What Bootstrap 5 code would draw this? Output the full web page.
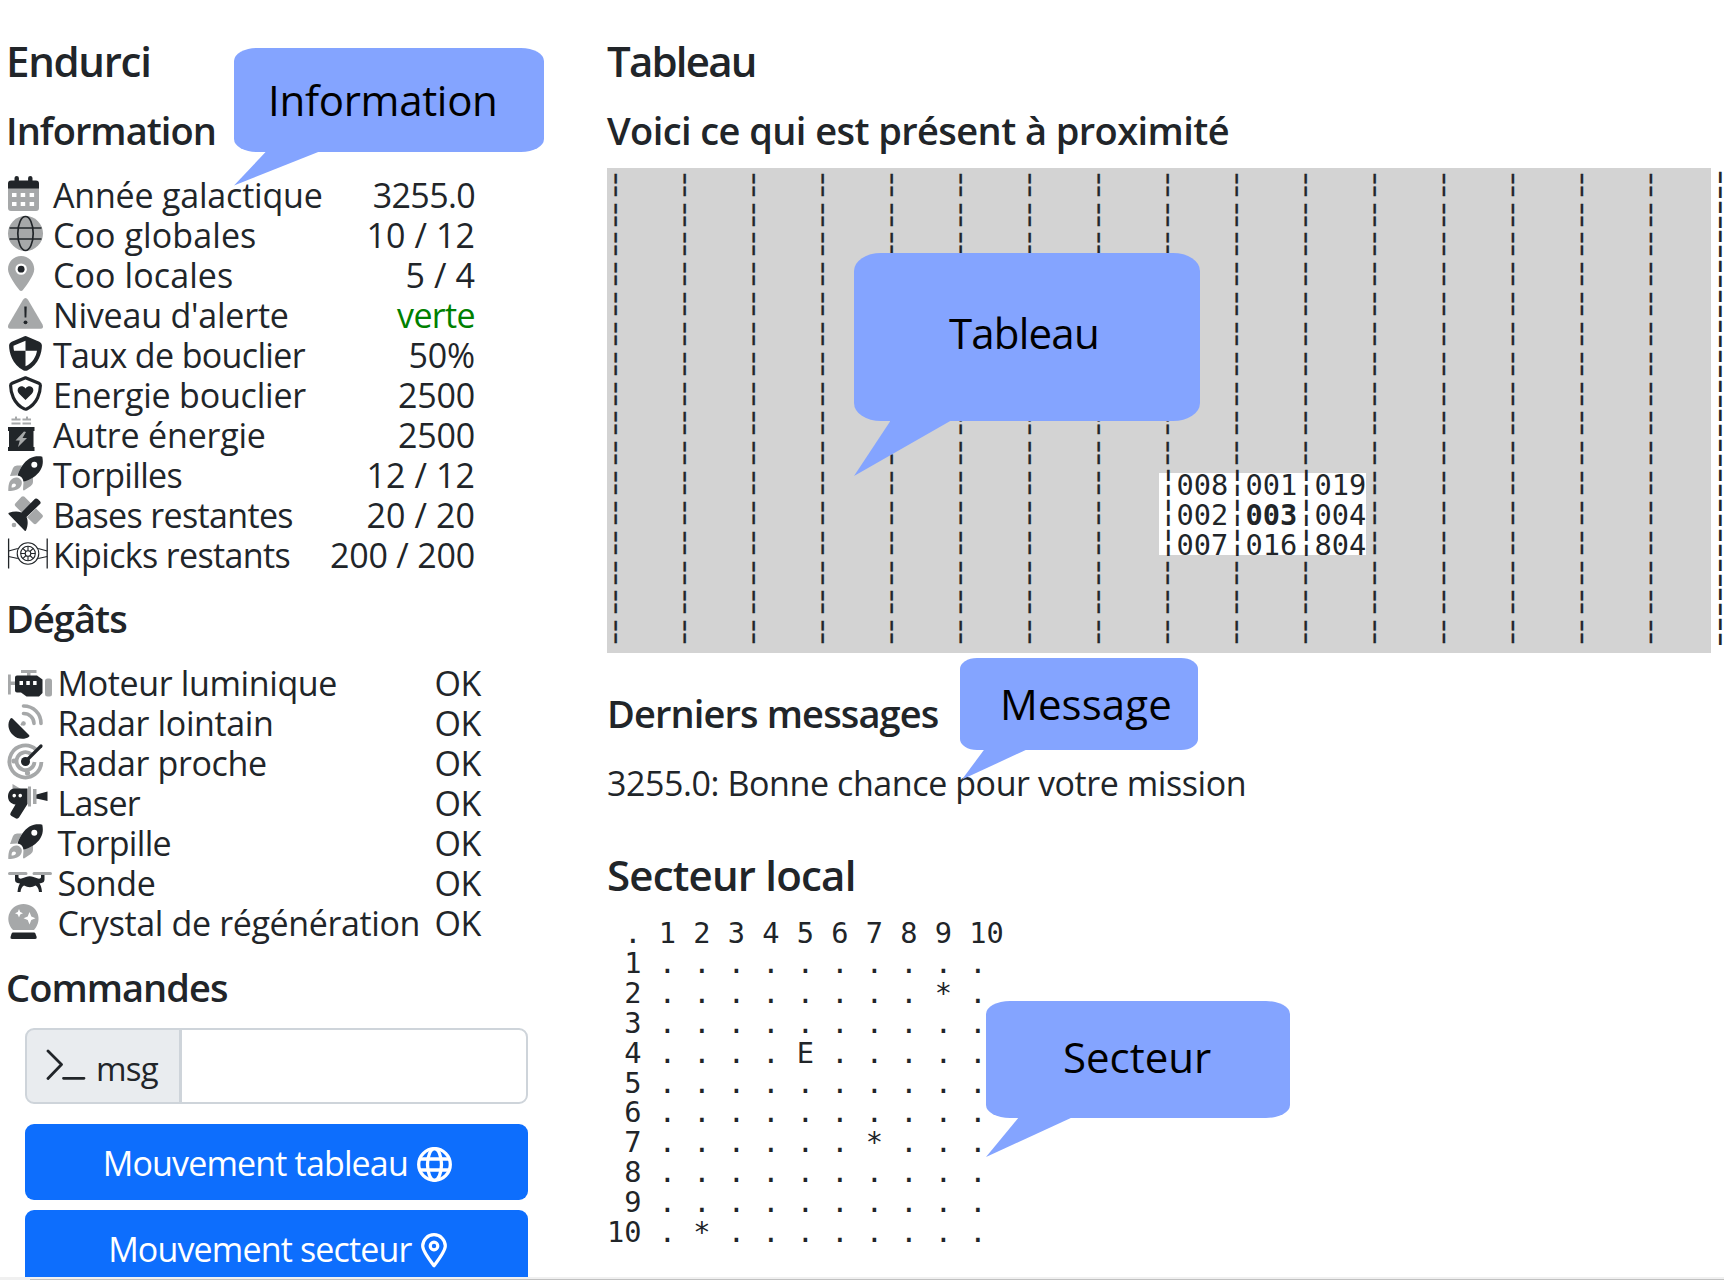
<!DOCTYPE html>
<html lang="fr">
<head>
<meta charset="utf-8">
<meta name="viewport" content="width=device-width, initial-scale=1">
<title>Endurci</title>
<link rel="stylesheet" href="https://cdn.jsdelivr.net/npm/bootstrap@5.3.0/dist/css/bootstrap.min.css">
<style>
  body { font-family: "Open Sans", sans-serif; font-size: 34px; line-height: 40.1px; color: #212529; overflow: hidden; height: 1280px; position: relative; }
  .game { height: 1277px; overflow: hidden; }
  .side { width: 607px; padding: 34.5px 0 0 7px; flex: none; }
  .main { width: 1117px; padding-top: 34.5px; flex: none; }
  h2, h3 { font-weight: 600; margin: 0; white-space: nowrap; }
  h2 { font-size: 42px; line-height: 52px; letter-spacing: -.8px; }
  h3 { font-size: 38px; line-height: 46px; letter-spacing: -.95px; margin-top: 20.8px; }
  .side h2, .side h3 { margin-left: -1px; }
  .ship { letter-spacing: -1.3px; }
  .board-title { letter-spacing: -1.8px; }
  .nearby { letter-spacing: -.58px; }
  .damage-title { margin-top: 19.5px; }
  .news-title { margin-top: 37.3px; letter-spacing: -.87px; }
  .sector-title { margin-top: 45px; }
  .info { width: 468px; margin-top: 21.3px; }
  .damage { width: 474px; margin-top: 21.5px; }
  .stat { height: 40.1px; white-space: nowrap; letter-spacing: -.2px; }
  .damage .stat { letter-spacing: -.37px; }
  .stat .snug { letter-spacing: -.65px; }
  .stat .roomy { letter-spacing: .1px; }
  .pic { width: 46px; height: 40.1px; flex: none; }
  .damage .pic { width: 50.5px; }
  .pic svg { display: block; width: 35px; height: 35px; margin: 1px 0 0 1px; overflow: visible; fill: #212529; }
  .soft { fill: #a6a8a9; }
  .green { color: green; }
  .cmds { width: 502.7px; margin: 18.2px 0 0 18px; }
  .cmds .input-group { height: 76px; margin-bottom: 20px; }
  .cmds .input-group-text { width: 155.5px; font-size: 33px; border: 2px solid #ced4da; background: #e9ecef; border-radius: 9px 0 0 9px; padding: 5px 0 0 19px; letter-spacing: -.8px; color: #212529; }
  .cmds .input-group-text svg { width: 40px; height: 31px; margin: -9px 10px 0 0; }
  .cmds .form-control { border: 2px solid #ced4da; border-radius: 0 9px 9px 0; }
  .cmds .btn { height: 76px; margin-bottom: 10px; font-size: 34px; line-height: 40px; border: 0; border-radius: 9px; letter-spacing: -.85px; padding: 1px 0 0 2px; --bs-btn-bg: #0d6efd; }
  .cmds .btn svg { margin-left: 9px; margin-top: -4px; }
  .cells { font-family: "DejaVu Sans Mono", monospace; font-size: 28.67px; line-height: 29.85px; white-space: pre; }
  .board { width: 1104px; height: 485px; margin-top: 14.7px; padding-top: 3.7px; background: #d3d3d3; }
  .line { height: 29.85px; display: flex; }
  .line span { display: inline-block; flex: none; height: 29.85px; }
  .bar { width: 17.26px; text-align: center; font-size: 25.5px; line-height: 22.5px; -webkit-text-stroke: .3px #212529; }
  .room { width: 51.78px; line-height: 31.5px; }
  .bar.tall { font-size: 30px; -webkit-text-stroke-width: .1px; }
  .seen { background: #fff; }
  .seen.first { background: linear-gradient(#d3d3d3 2.6px, #fff 2.6px); }
  .seen.last { background: linear-gradient(#fff 25.2px, #d3d3d3 25.2px); }
  .news { margin: 27.2px 0 0; letter-spacing: -.42px; }
  .sector { margin: 18.8px 0 0; overflow: visible; color: #212529; }
  .hbar { height: 3px; background: #f0f0f0; }
  .hbar div { height: 1px; margin-left: 30px; background: #c1c1c1; position: relative; top: 2px; }
  .bubble { position: absolute; background: #84a4ff; border-radius: 23px / 13px; color: #000; font-size: 42px; line-height: 56px; white-space: nowrap; }
  .bubble::after { content: ""; position: absolute; left: 0; top: 100%; background: #84a4ff; margin-top: -1px; }
  .b-info { left: 234px; top: 48px; width: 310px; height: 103.5px; padding: 24px 0 0 34px; letter-spacing: -.3px; }
  .b-info::after { width: 88px; height: 35px; clip-path: polygon(33px 0, 88px 0, 0 100%); }
  .b-board { left: 854px; top: 253px; width: 346px; height: 168px; border-radius: 27px / 18px; padding: 52px 0 0 95px; letter-spacing: -.8px; }
  .b-board::after { width: 98px; height: 56px; clip-path: polygon(37px 0, 98px 0, 0 100%); }
  .b-msg { left: 960px; top: 658px; width: 238px; height: 91.5px; border-radius: 17px / 11px; padding: 18px 0 0 40px; letter-spacing: .1px; }
  .b-msg::after { width: 69px; height: 31px; clip-path: polygon(25px 0, 69px 0, 2px 100%); }
  .b-sector { left: 986px; top: 1001px; width: 304px; height: 117px; border-radius: 24px / 13px; padding: 28px 0 0 77px; }
  .b-sector::after { width: 87px; height: 40px; clip-path: polygon(33px 0, 87px 0, 0 100%); }
</style>
<script src="https://cdn.jsdelivr.net/npm/bootstrap@5.3.0/dist/js/bootstrap.bundle.min.js"></script>
</head>
<body>
<svg class="d-none">
  <symbol id="rocket" viewBox="0 0 35 35">
    <path class="soft" d="M2 20 5 12q1-2.500 4-2.500H14L9 19.500zM15.500 26 25 20.500V26q0 2.500-2.200 4L16 34.500q-1 0-1-1z"/>
    <path class="soft" fill-rule="evenodd" d="M2.500 24.500C5 21.500 9 20.500 12 23s2 6.500-.5 9C9 34.500 3 35 .3 35 .3 32 .4 27 2.500 24.500zm2 3.500c-.8.800-1 2.500-.9 3.500 1 .1 2.800-.1 3.600-.9.900-.9 1-2 .2-2.700s-2-.7-2.900.100z"/>
    <path fill-rule="evenodd" d="M34.300.7C31 0 26 0 21.500 2.500 16 6 12 12 9.500 19.500q3 .5 4.200 2 1.300 1.500 1.800 4.200C22 24 29 20 32.500 14 35.500 9 35 4 34.300.7zM26.300 5.800a3 3 0 1 1 0 6 3 3 0 0 1 0-6z"/>
  </symbol>
</svg>

<div class="game d-flex">
  <div class="side">
    <h2 class="ship">Endurci</h2>
    <h3>Information</h3>
    <div class="info">
      <div class="stat d-flex"><span class="pic"><svg viewBox="0 0 35 35"><path class="soft" fill-rule="evenodd" d="M0 12H31V32q0 3-3 3H3q-3 0-3-3zM4 17v4h4.500v-4zm8.700 0v4h4.500v-4zm8.900 0v4h4.500v-4zM4 26v4h4.500v-4zm8.700 0v4h4.500v-4zm8.900 0v4h4.500v-4z"/><path d="M0 12.500V7.500q0-3 3-3H6.500V2q0-2 2.200-2t2.200 2v2.500h9.200V2q0-2 2.200-2t2.200 2v2.500H28q3 0 3 3v5z"/></svg></span><span>Année galactique</span><span class="ms-auto snug">3255.0</span></div>
      <div class="stat d-flex"><span class="pic"><svg viewBox="0 0 35 35"><circle class="soft" cx="17.500" cy="17.500" r="17.500"/><g fill="none" stroke="#212529" stroke-width="1.700"><ellipse cx="17.500" cy="17.500" rx="7.700" ry="17"/><path d="M1.500 12H33.500M1.500 23H33.500"/></g></svg></span><span class="roomy">Coo globales</span><span class="ms-auto roomy">10 / 12</span></div>
      <div class="stat d-flex"><span class="pic"><svg viewBox="0 0 512 512"><path class="soft" fill-rule="evenodd" d="M384 192c0 87.400-117 243-168.300 307.200-12.300 15.300-35.100 15.300-47.400 0C117 435 0 279.400 0 192 0 86 86 0 192 0s192 86 192 192zM192 108a84 84 0 1 0 0 168 84 84 0 0 0 0-168z"/><circle cx="192" cy="192" r="50"/></svg></span><span class="roomy">Coo locales</span><span class="ms-auto roomy">5 / 4</span></div>
      <div class="stat d-flex"><span class="pic"><svg viewBox="0 0 35 35"><path class="soft" d="M15 3.800q2.500-3.500 5 0L34.500 28.500q1.800 4-2 4.300H2.500q-3.800-.3-2-4.300z"/><path d="M16.300 10.500h2.400l-.3 11h-1.800z"/><circle cx="17.500" cy="26.300" r="1.900"/></svg></span><span>Niveau d'alerte</span><span class="ms-auto green snug">verte</span></div>
      <div class="stat d-flex"><span class="pic"><svg viewBox="0 0 512 512"><path fill-rule="evenodd" d="M269.400 2.900a32 32 0 0 0-26.800 0L54.300 82.800c-22 9.300-38.400 31-38.300 57.200.5 99.200 41.300 280.700 213.600 363.200 16.700 8 36.100 8 52.800 0C454.700 420.700 495.500 239.200 496 140c.1-26.200-16.300-47.900-38.300-57.200zM256 70V214H88C82 190 80 165 80 141zm0 144H424C410 300 362 390 256 444z"/></svg></span><span class="snug">Taux de bouclier</span><span class="ms-auto">50%</span></div>
      <div class="stat d-flex"><span class="pic"><svg viewBox="0 0 512 512"><path fill="none" stroke="#212529" stroke-width="46" stroke-linejoin="round" d="M256 25 60 107c-14 6-22 18-22 33 1 95 40 265 201 342 11 5 23 5 34 0 161-77 200-247 201-342 0-15-8-27-22-33z"/><path d="M256 352 163 260c-30-31-28-72-3-94 27-23 64-17 87 7l9 9 9-9c23-24 60-30 87-7 25 22 27 63-3 94z"/></svg></span><span>Energie bouclier</span><span class="ms-auto">2500</span></div>
      <div class="stat d-flex"><span class="pic"><svg viewBox="0 0 35 35"><path class="soft" d="M3.500 2.500H7V1q1-1.500 2 0v1.500h3.500v2h-9zM14.500 2.500H18V1q1-1.500 2 0v1.500h3v2h-8.500zM3.500 6.500h9v2h-9zM14.500 6.500H23v2h-8.500z"/><path d="M0 11H26.500V15H25.500V31H26.500V35H0V31H1V15H0z"/><path class="soft" d="M16 15.500 7.500 24.500h4.300L10 31l9-9h-4.500l3.500-6z"/></svg></span><span>Autre énergie</span><span class="ms-auto">2500</span></div>
      <div class="stat d-flex"><span class="pic"><svg><use href="#rocket"/></svg></span><span class="snug">Torpilles</span><span class="ms-auto roomy">12 / 12</span></div>
      <div class="stat d-flex"><span class="pic"><svg viewBox="0 0 35 35"><path class="soft" d="M13.500.8q1.500-1.300 3 0l7 7-9 9.500-7-7q-1.500-1.500 0-3zM28 12.500l6.300 6.300q1.300 1.300 0 2.600l-5.800 6q-1.500 1.500-3 0l-6.500-6.200z"/><circle class="soft" cx="6" cy="29" r="2.300"/><path d="M27 2.800q1.500-1 3 .5l2 2q1.300 1.300 0 2.800L18.500 21c1.500 3 1.800 8-.5 13.500q-.5.800-1.300.2L.7 18.300q-.7-1 .3-1.500C5 15.500 9.500 15 13.500 16.500z"/></svg></span><span class="snug">Bases restantes</span><span class="ms-auto roomy">20 / 20</span></div>
      <div class="stat d-flex"><span class="pic"><svg viewBox="0 0 35 35"><g fill="none" stroke="#212529" stroke-width="1.100"><path d="M.6 2.500V32.500M39.200 2.500V32.500" stroke-width="1.300"/><circle cx="20" cy="17.500" r="10.800"/><circle cx="20" cy="17.500" r="7.300"/><circle cx="20" cy="17.500" r="2.800"/><path d="M.6 15 9.800 12.500M.6 20.500 9.800 22.500M39.200 15 30.200 12.500M39.200 20.500 30.200 22.500M20 10.200v4.500M20 20.300v4.500M12.700 17.500h4.500M22.800 17.500h4.500M14.800 12.300 18 15.500M22 19.500l3.200 3.200M25.200 12.300 22 15.500M18 19.500l-3.200 3.200"/></g></svg></span><span class="snug">Kipicks restants</span><span class="ms-auto">200 / 200</span></div>
    </div>

    <h3 class="damage-title">Dégâts</h3>
    <div class="damage">
      <div class="stat d-flex"><span class="pic"><svg viewBox="0 0 35 35"><path class="soft" d="M13 6H28.500v3H22.500v4H19V9H13zM0 10.500h2.800v7H7V21H2.800v9.500H0z"/><rect class="soft" x="37" y="14.500" width="7" height="18" rx="2.500"/><path fill-rule="evenodd" d="M9 11.500H29L34.500 15.500V29l-3.500 3.500H18.500L13 28.500H9q-2 0-2-2v-13q0-2 2-2zM11.500 17v4h3.500v-4zm6.800 0v4h3.500v-4zm6.800 0v4h3.500v-4z"/></svg></span><span>Moteur luminique</span><span class="ms-auto">OK</span></div>
      <div class="stat d-flex"><span class="pic"><svg viewBox="0 0 35 35"><g fill="none" stroke="#a6a8a9" stroke-width="3.600" stroke-linecap="round"><path d="M15.500 2C25.500 2 33 9.500 33 19.500M15.500 9.500C21.500 9.500 26 14 26 19.500"/></g><path d="M13 21 16 18" stroke="#a6a8a9" stroke-width="2"/><circle class="soft" cx="15.500" cy="19.500" r="2.300"/><path d="M2.500 14.500q1-1 2 0L21 31q1 1 0 1.800C16.500 36 9.500 35.500 5 31 0 26.500-1 19.500 2.500 14.500z"/></svg></span><span>Radar lointain</span><span class="ms-auto">OK</span></div>
      <div class="stat d-flex"><span class="pic"><svg viewBox="0 0 35 35"><g fill="none" stroke="#a6a8a9" stroke-width="3.800"><path d="M28 5.500A16 16 0 1 0 33.400 18M23.300 10.200A9 9 0 1 0 26.500 18"/></g><g class="soft"><circle cx="6" cy="17" r="2.600"/><circle cx="19.500" cy="29" r="2.600"/><circle cx="12" cy="24" r="1.500"/></g><path d="M17.500 17.500 33 2" stroke="#212529" stroke-width="3.200" stroke-linecap="round"/><circle cx="17.500" cy="17.500" r="4.500"/></svg></span><span>Radar proche</span><span class="ms-auto">OK</span></div>
      <div class="stat d-flex"><span class="pic"><svg viewBox="0 0 35 35"><path class="soft" d="M4.500 0 13 5H4.500zM20 2.500h3v20H20zM25 5h3.500v15H25zM28 10.800h5v4h-5z"/><path fill-rule="evenodd" d="M6 4.500H19.500V20L11 33.500q-1 1.500-3 1L3.500 32Q1.500 31 2.500 29L7.500 20.500C2.500 20 0 16.500 0 12.500S2.500 4.500 6 4.500zM6.200 9.800a1.800 1.800 0 1 0 .1 3.600 1.800 1.800 0 0 0-.1-3.600zm6 0a1.800 1.800 0 1 0 .1 3.600 1.800 1.800 0 0 0-.1-3.600zM28.500 10.500 39.500 7.500v9.500L28.500 14.500z"/></svg></span><span class="snug">Laser</span><span class="ms-auto">OK</span></div>
      <div class="stat d-flex"><span class="pic"><svg><use href="#rocket"/></svg></span><span class="snug">Torpille</span><span class="ms-auto">OK</span></div>
      <div class="stat d-flex"><span class="pic"><svg viewBox="0 -5.500 35 35"><path d="M7 2.500h3.500V8q1 1.500 3 1L18 7.500q3.700-1.300 7.500 0L30 9q2.500.5 3-1V2.500h3.500V10q0 3-3 3.500L31.500 14q2 2.500 2.500 8.500h-3q-.5-5-3.500-6.500-5.500 3.500-11.500 0-3 1.500-3.500 6.500h-3Q10 16.500 12 14l-2.500-.5Q7 13 7 10z"/><path class="soft" d="M1.500 2.500H18q1.500 0 1.500 1.500T18 5.500H1.500Q0 5.500 0 4t1.500-1.500zM26 2.500H42.500Q44 2.500 44 4t-1.500 1.500H26Q24.500 5.500 24.500 4T26 2.500z"/></svg></span><span>Sonde</span><span class="ms-auto">OK</span></div>
      <div class="stat d-flex"><span class="pic"><svg viewBox="0 0 35 35"><path class="soft" fill-rule="evenodd" d="M5 26C-5 15 2.500 0 15.500 0S36 15 26 26zM11 5 9.800 8 7 9.200l2.800 1.200L11 13.500l1.200-3.100L15 9.200 12.200 8zM21.500 8 19.700 12.500 15.500 14.300l4.200 1.800L21.500 20.500l1.800-4.400 4.200-1.800-4.200-1.800z"/><path d="M5 28.500H26q1 0 1.500 1.200l1.200 3.300q.3 2-1.500 2H4q-2 0-1.500-2l1-3.300Q4 28.500 5 28.500z"/></svg></span><span>Crystal de régénération</span><span class="ms-auto">OK</span></div>
    </div>

    <h3>Commandes</h3>
    <div class="cmds">
      <div class="input-group flex-nowrap">
        <span class="input-group-text"><svg viewBox="0 0 40 31" fill="none" stroke="#212529" stroke-width="2.800" stroke-linecap="round" stroke-linejoin="round"><path d="M2 2 15.500 15.500 2 29.500M17.500 29.300H38"/></svg>msg</span>
        <input type="text" class="form-control" aria-label="msg">
      </div>
      <button class="btn btn-primary w-100">Mouvement tableau<svg width="35" height="35" viewBox="0 0 35 35" fill="none" stroke="#fff" stroke-width="3.300"><circle cx="17.500" cy="17.500" r="15.800"/><ellipse cx="17.500" cy="17.500" rx="7" ry="15.800"/><path d="M3 12H32M3 23H32"/></svg></button>
      <button class="btn btn-primary w-100">Mouvement secteur<svg width="26" height="35" viewBox="0 0 26 35" fill="none" stroke="#fff" stroke-width="3.200"><path stroke-linejoin="round" d="M13 32.800C9 27.500 1.700 18 1.700 13a11.300 11.300 0 0 1 22.600 0c0 5-7.300 14.500-11.300 19.800z"/><circle cx="13" cy="13" r="3.800"/></svg></button>
    </div>
  </div>

  <div class="main">
    <h2 class="board-title">Tableau</h2>
    <h3 class="nearby">Voici ce qui est présent à proximité</h3>
    <div class="board cells" id="board"></div>
    <h3 class="news-title">Derniers messages</h3>
    <p class="news">3255.0: Bonne chance pour votre mission</p>
    <h2 class="sector-title">Secteur local</h2>
    <pre class="sector cells"> . 1 2 3 4 5 6 7 8 9 10
 1 . . . . . . . . . .
 2 . . . . . . . . * .
 3 . . . . . . . . . .
 4 . . . . E . . . . .
 5 . . . . . . . . . .
 6 . . . . . . . . . .
 7 . . . . . . * . . .
 8 . . . . . . . . . .
 9 . . . . . . . . . .
10 . * . . . . . . . .</pre>
  </div>
</div>
<div class="hbar"><div></div></div>

<div class="bubble b-info">Information</div>
<div class="bubble b-board">Tableau</div>
<div class="bubble b-msg">Message</div>
<div class="bubble b-sector">Secteur</div>

<script>
  // Known quadrants around the ship, by row; everything else is unexplored.
  const known = { 10: ['008', '001', '019'], 11: ['002', '003', '004'], 12: ['007', '016', '804'] };
  const place = { 10: 'first', 11: '', 12: 'last' };
  let html = '';
  for (let r = 0; r < 16; r++) {
    html += '<div class="line">';
    for (let c = 0; c < 16; c++) {
      const k = known[r] && c >= 8 && c <= 10 ? known[r][c - 8] : null;
      const s = k ? ' seen ' + place[r] : '';
      html += `<span class="bar${s}${k ? ' tall' : ''}">¦</span><span class="room${s}${k === '003' ? ' fw-bold' : ''}">${k || '   '}</span>`;
    }
    html += '<span class="bar tall">¦</span></div>';
  }
  document.getElementById('board').innerHTML = html;
</script>
</body>
</html>
